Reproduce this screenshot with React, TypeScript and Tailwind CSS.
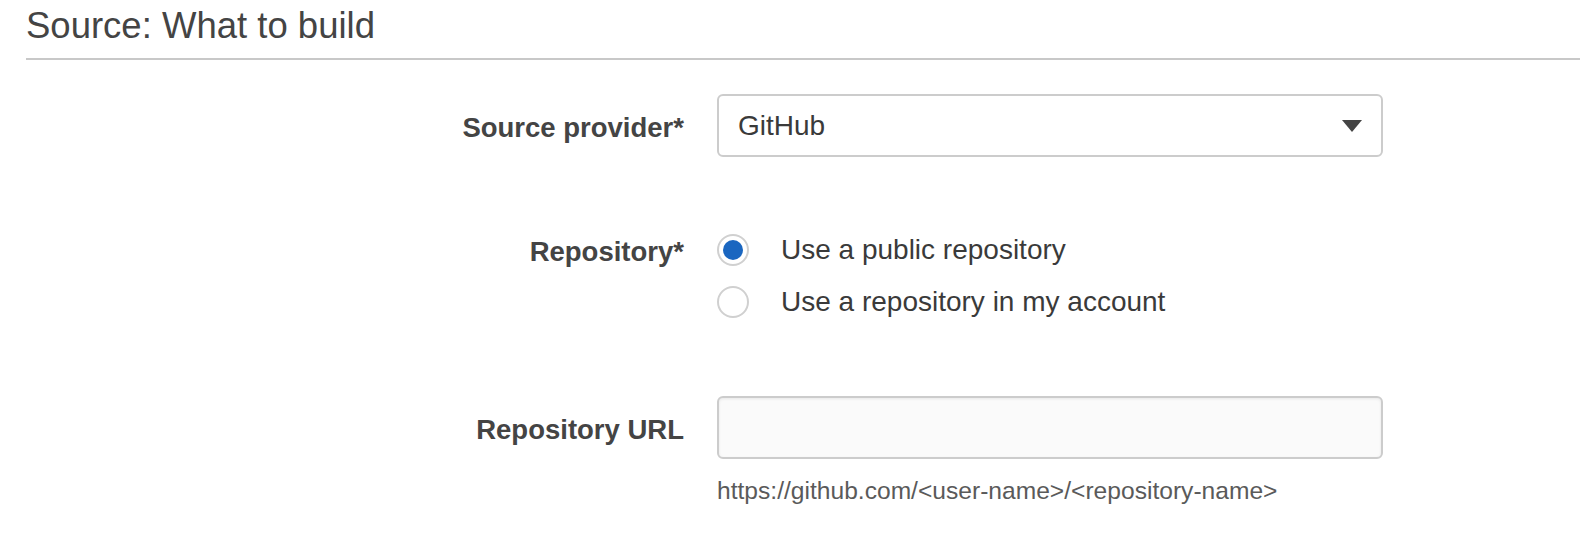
import { useState } from 'react';

const font = { fontFamily: '"Liberation Sans", Arial, sans-serif' };

export default function App() {
  const [repo, setRepo] = useState<'public' | 'mine'>('public');

  const options = [
    { id: 'public' as const, label: 'Use a public repository' },
    { id: 'mine' as const, label: 'Use a repository in my account' },
  ];

  return (
    <div className="w-[1580px] h-[550px] bg-white pl-[26px] overflow-hidden" style={font}>
      {/* Section header */}
      <h2 className="pt-[5px] text-[36.5px] leading-[42px] text-[#444] font-normal">Source: What to build</h2>
      <div className="mt-[11px] h-[2px] bg-[#c8c8c8]" />

      {/* Source provider */}
      <div className="mt-[34px] flex items-center gap-[33px]">
        <label className="w-[658px] mt-[4px] text-right text-[27.5px] leading-[30px] font-bold text-[#444]">
          Source provider*
        </label>
        <div className="relative w-[666px] h-[63px] flex items-center rounded-[6px] border-2 border-[#ccc] bg-white pl-[19px]">
          <span className="text-[28px] leading-[32px] text-[#3a3a3a]">GitHub</span>
          <svg className="absolute right-[19px] top-[24px]" width="20" height="12" viewBox="0 0 20 12">
            <path d="M0 0h20L10 12z" fill="#444" />
          </svg>
        </div>
      </div>

      {/* Repository */}
      <div className="mt-[67px] flex items-start gap-[33px]">
        <label className="w-[658px] pt-[2px] text-right text-[27.5px] leading-[52px] font-bold text-[#444]">
          Repository*
        </label>
        <div className="flex flex-col">
          {options.map((o) => (
            <button
              key={o.id}
              onClick={() => setRepo(o.id)}
              className="h-[52px] flex items-center gap-[32px] text-left"
            >
              <span className="w-[32px] h-[32px] rounded-full border-2 border-[#d0d0d0] bg-white flex items-center justify-center">
                {repo === o.id && <span className="w-[20px] h-[20px] rounded-full bg-[#1a66c0]" />}
              </span>
              <span className="text-[28px] leading-[32px] text-[#3a3a3a]">{o.label}</span>
            </button>
          ))}
        </div>
      </div>

      {/* Repository URL */}
      <div className="mt-[68px] flex items-center gap-[33px]">
        <label className="w-[658px] mt-[4px] text-right text-[27.5px] leading-[30px] font-bold text-[#444]">
          Repository URL
        </label>
        <input
          type="text"
          className="w-[666px] h-[63px] rounded-[6px] border-2 border-[#ccc] bg-[#fafafa] px-[19px] text-[28px] text-[#333] shadow-[inset_0_1px_3px_rgba(0,0,0,0.08)] outline-none"
        />
      </div>
      <div className="mt-[18px] pl-[691px] text-[24.6px] leading-[28px] text-[#5a5a5a]">
        https://github.com/&lt;user-name&gt;/&lt;repository-name&gt;
      </div>
    </div>
  );
}
